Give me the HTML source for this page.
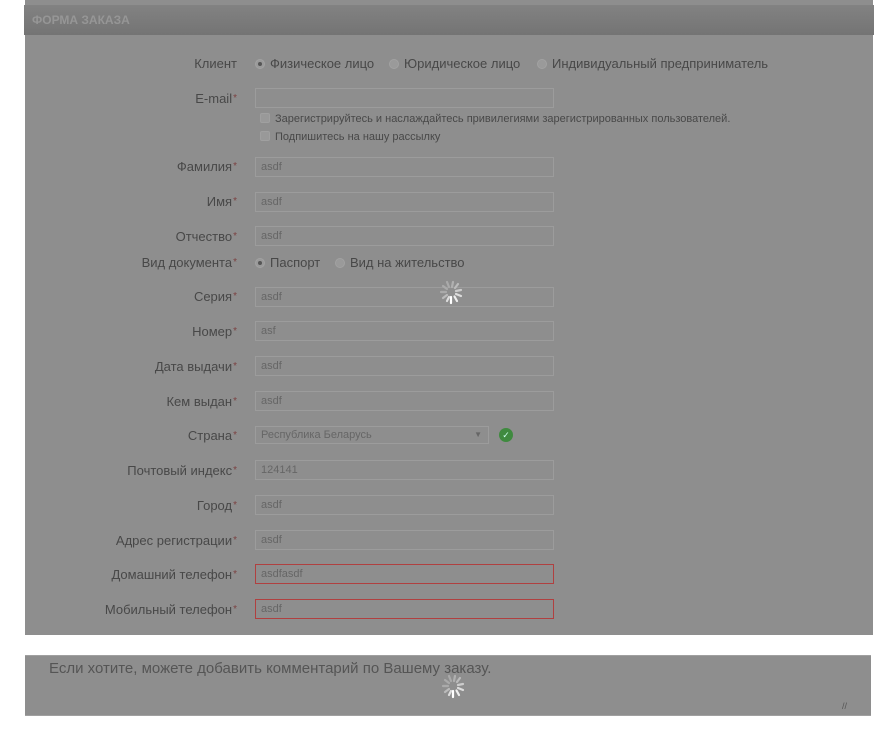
<!DOCTYPE html>
<html><head><meta charset="utf-8"><style>
*{margin:0;padding:0;box-sizing:border-box}
body{width:895px;height:734px;background:#fff;position:relative;font-family:"Liberation Sans",sans-serif;overflow:hidden}
.panel{position:absolute;left:25px;top:0;width:848px;height:635px;background:#8e8e8e}
.hdr{position:absolute;left:24px;top:5px;width:850px;height:30px;background:linear-gradient(#828282,#747474);color:#969696;font-weight:bold;font-size:12px;line-height:30px;padding-left:8px}
.lbl{position:absolute;right:658px;font-size:13px;color:#484848;text-align:right;white-space:nowrap}
.lbl b{color:#7c4242;font-weight:normal;font-size:10px;vertical-align:2px;margin-left:1px}
.inp{position:absolute;left:255px;width:299px;height:20px;border:1px solid #9c9c9c;font-size:11px;color:#666;line-height:18px;padding-left:5px}
.red{border-color:#b04040}
.opt{position:absolute;font-size:13px;color:#484848;white-space:nowrap}
.r{display:inline-block;width:10px;height:10px;border-radius:50%;background:#9a9a9a;border:1px solid #a2a2a2;vertical-align:-1px;margin-right:5px;position:relative}
.r.on::after{content:"";position:absolute;left:2px;top:2px;width:4px;height:4px;border-radius:50%;background:#555}
.cb{position:absolute;left:260px;font-size:11px;color:#484848;white-space:nowrap}
.cb i{display:inline-block;width:10px;height:10px;border:1px solid #a0a0a0;background:#999;vertical-align:-1px;margin-right:5px;border-radius:2px}
.ta{position:absolute;left:25px;top:655px;width:846px;height:61px;background:#8e8e8e;border-top:1px solid #a0a0a0;border-bottom:1px solid #a0a0a0;font-size:15px;color:#555;padding:4px 0 0 24px}
</style></head><body>
<div class="panel"></div>
<div class="hdr">ФОРМА ЗАКАЗА</div>

<div class="lbl" style="top:56px">Клиент</div>
<div class="opt" style="left:255px;top:56px"><span class="r on"></span>Физическое лицо</div>
<div class="opt" style="left:389px;top:56px"><span class="r"></span>Юридическое лицо</div>
<div class="opt" style="left:537px;top:56px"><span class="r"></span>Индивидуальный предприниматель</div>

<div class="lbl" style="top:91px">E-mail<b>*</b></div>
<div class="inp" style="top:88px"></div>
<div class="cb" style="top:113px"><i></i>Зарегистрируйтесь и наслаждайтесь привилегиями зарегистрированных пользователей.</div>
<div class="cb" style="top:131px"><i></i>Подпишитесь на нашу рассылку</div>

<div class="lbl" style="top:159px">Фамилия<b>*</b></div><div class="inp" style="top:157px">asdf</div>
<div class="lbl" style="top:194px">Имя<b>*</b></div><div class="inp" style="top:192px">asdf</div>
<div class="lbl" style="top:229px">Отчество<b>*</b></div><div class="inp" style="top:226px">asdf</div>
<div class="lbl" style="top:255px">Вид документа<b>*</b></div>
<div class="opt" style="left:255px;top:255px"><span class="r on"></span>Паспорт</div>
<div class="opt" style="left:335px;top:255px"><span class="r"></span>Вид на жительство</div>
<div class="lbl" style="top:289px">Серия<b>*</b></div><div class="inp" style="top:287px">asdf</div>
<div class="lbl" style="top:324px">Номер<b>*</b></div><div class="inp" style="top:321px">asf</div>
<div class="lbl" style="top:359px">Дата выдачи<b>*</b></div><div class="inp" style="top:356px">asdf</div>
<div class="lbl" style="top:394px">Кем выдан<b>*</b></div><div class="inp" style="top:391px">asdf</div>
<div class="lbl" style="top:428px">Страна<b>*</b></div>
<div class="inp" style="top:426px;width:234px;height:18px;line-height:16px">Республика Беларусь<span style="position:absolute;right:6px;font-size:8px">▼</span></div>
<div style="position:absolute;left:499px;top:428px;width:14px;height:14px;border-radius:50%;background:#3f8a3f;color:#cfe;font-size:9px;text-align:center;line-height:14px">✓</div>
<div class="lbl" style="top:463px">Почтовый индекс<b>*</b></div><div class="inp" style="top:460px">124141</div>
<div class="lbl" style="top:498px">Город<b>*</b></div><div class="inp" style="top:495px">asdf</div>
<div class="lbl" style="top:533px">Адрес регистрации<b>*</b></div><div class="inp" style="top:530px">asdf</div>
<div class="lbl" style="top:567px">Домашний телефон<b>*</b></div><div class="inp red" style="top:564px">asdfasdf</div>
<div class="lbl" style="top:602px">Мобильный телефон<b>*</b></div><div class="inp red" style="top:599px">asdf</div>

<svg style="position:absolute;left:437px;top:278px" width="28" height="28" viewBox="-14 -14 28 28">
<g stroke-width="2.2" stroke-linecap="round">
<line x1="0" y1="5" x2="0" y2="11" stroke="#fff"/>
<line x1="3.5" y1="4.5" x2="6" y2="9" stroke="#eee"/>
<line x1="5" y1="2" x2="10" y2="4" stroke="#ddd"/>
<line x1="5" y1="-1" x2="10" y2="-2" stroke="#ccc"/>
<line x1="4" y1="-4" x2="7" y2="-8" stroke="#bbb"/>
<line x1="1" y1="-5" x2="2" y2="-10" stroke="#b0b0b0"/>
<line x1="-2" y1="-5" x2="-4" y2="-10" stroke="#aaa"/>
<line x1="-4" y1="-3" x2="-8" y2="-6" stroke="#aaa"/>
<line x1="-5" y1="0" x2="-10" y2="0" stroke="#aaa"/>
<line x1="-4" y1="3" x2="-8" y2="6" stroke="#bbb"/>
<line x1="-2" y1="5" x2="-4" y2="9" stroke="#ddd"/>
</g></svg>

<div class="ta">Если хотите, можете добавить комментарий по Вашему заказу.
<span style="position:absolute;right:24px;bottom:4px;font-size:9px;color:#555">//</span></div>
<svg style="position:absolute;left:439px;top:672px" width="28" height="28" viewBox="-14 -14 28 28">
<g stroke-width="2.2" stroke-linecap="round">
<line x1="0" y1="5" x2="0" y2="11" stroke="#fff"/>
<line x1="3.5" y1="4.5" x2="6" y2="9" stroke="#eee"/>
<line x1="5" y1="2" x2="10" y2="4" stroke="#ddd"/>
<line x1="5" y1="-1" x2="10" y2="-2" stroke="#ccc"/>
<line x1="4" y1="-4" x2="7" y2="-8" stroke="#bbb"/>
<line x1="1" y1="-5" x2="2" y2="-10" stroke="#b0b0b0"/>
<line x1="-2" y1="-5" x2="-4" y2="-10" stroke="#aaa"/>
<line x1="-4" y1="-3" x2="-8" y2="-6" stroke="#aaa"/>
<line x1="-5" y1="0" x2="-10" y2="0" stroke="#aaa"/>
<line x1="-4" y1="3" x2="-8" y2="6" stroke="#bbb"/>
<line x1="-2" y1="5" x2="-4" y2="9" stroke="#ddd"/>
</g></svg>
</body></html>
